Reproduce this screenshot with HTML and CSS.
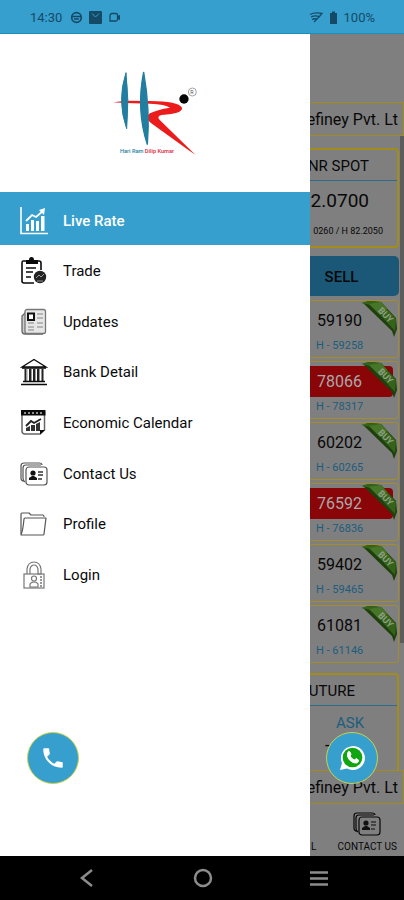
FILE: index.html
```
<!DOCTYPE html>
<html lang="en">
<head>
<meta charset="utf-8">
<meta name="viewport" content="width=device-width, initial-scale=1">
<title>Live Rate</title>
<link rel="stylesheet" href="styles.css">
</head>
<body>
<svg class="defs" aria-hidden="true">
  <symbol id="ribbon" viewBox="0 0 36 36">
    <path d="M2 2 L8 0 L20 1 L35 17 L36 28 L33 36 L31 30 Z" fill="#1f400c"/>
    <path d="M0 2 L7 0 L20 1 L35 18 L34 30 L10 4 Z" fill="#33641a"/>
    <path d="M8 3 L20 1 L26 8 L19 14 Z" fill="#477629"/>
  </symbol>
  <symbol id="cards" viewBox="0 0 28 28">
    <g fill="none" stroke="currentColor" stroke-width="1.2">
      <path d="M4 21 Q1 21 1 18 V6 Q1 3 4 3 H19 Q22 3 22 5"/>
      <path d="M5 22 Q3 21 3 18 V8 Q3 5 6 5 H21"/>
      <rect x="6" y="7" width="21" height="18" rx="3"/>
    </g>
    <circle cx="13" cy="13" r="2.6" fill="#111"/>
    <path d="M9 20 V18 L12 16 H14 L17 18 V20 Z" fill="#111"/>
    <path d="M18 12 H23 M18 15 H23 M18 19 H22" stroke="#333" stroke-width="1.4"/>
  </symbol>
</svg>

<div class="phone">
  <header class="status">
    <span class="clock">14:30</span>
    <svg width="13" height="13" viewBox="0 0 13 13"><circle cx="6.5" cy="6.5" r="4.8" fill="none" stroke="currentColor" stroke-width="1.7"/><path d="M2 5.5 H11 M4 8 H9" stroke="currentColor" stroke-width="1.5"/></svg>
    <svg width="13" height="13" viewBox="0 0 13 13"><rect width="13" height="13" rx="1" fill="currentColor"/><path d="M3 2.5 L6.5 6 L10 2.5" fill="none" stroke="#369fce" stroke-width="1"/></svg>
    <svg width="13" height="13" viewBox="0 0 13 13"><path d="M4 2.5 H8 Q9.500 2.500 9.500 4 V8.500 Q9.500 10 8 10 H2 V5 Q2 2.500 4 2.500" fill="none" stroke="currentColor" stroke-width="1.300"/><path d="M9 5 L12 4 V9 L9 8 Z" fill="currentColor"/></svg>
    <span class="spacer"></span>
    <svg width="14" height="13" viewBox="0 0 14 13"><g fill="none" stroke="currentColor" stroke-width="1.300"><path d="M1 3.500 Q6 1 13 2.500 L10 6"/><path d="M2 6 Q6 4 10 5.500 M3 8.500 Q6 7 8.500 8.500 M5 11 L10 6"/></g></svg>
    <svg width="9" height="14" viewBox="0 0 9 14"><path d="M3 0.500 H6 V2 H8 V13 H1 V2 H3 Z" fill="currentColor"/></svg>
    <span>100%</span>
  </header>

  <main class="stage">
    <aside class="drawer">
      <div class="brand">
        <svg width="110" height="100" viewBox="0 0 330 300" role="img" aria-label="Company logo">
          <path d="M40 127 L78 122 L150 123 Q235 124 246 143 Q250 160 185 165 Q168 169 180 181 L286 284 L265 270 L160 194 Q128 174 150 160 Q170 149 210 143 Q196 132 150 131 L75 129 Z" fill="#ec1c1c"/>
          <path d="M78 38 Q50 122 80 206 Q88 120 78 38 Z" fill="#217ea0" stroke="#217ea0" stroke-width="3"/>
          <path d="M131 36 Q108 150 142 254 Q151 150 131 36 Z" fill="#217ea0" stroke="#217ea0" stroke-width="4"/>
          <circle cx="252" cy="117" r="14" fill="#050505"/>
          <circle cx="277" cy="96" r="12" fill="none" stroke="#777" stroke-width="2"/>
          <text x="271" y="102" font-size="16" fill="#555">R</text>
          <text x="60" y="280" font-size="17" font-weight="500" fill="#2583a6">Hari Ram <tspan fill="#e02a3a">Dilip Kumar</tspan></text>
        </svg>
      </div>
      <nav>
        <ul class="menu">
          <li><a class="active" href="#live">
            <svg width="28" height="28" viewBox="0 0 28 28"><g fill="none" stroke="currentColor"><path d="M1 0 V26.500 H28" stroke-width="1.600"/><path d="M6 14 L12 8 L16 10 L23 4" stroke-width="1.800"/></g><path d="M19 3 L25 1 L24 8 Z" fill="currentColor"/><path d="M6 17 H9 V24 H6 Z M11 13 H14 V24 H11 Z M16 14 H19 V24 H16 Z M21 9 H24.500 V24 H21 Z" fill="currentColor"/></svg>
            Live Rate</a></li>
          <li><a href="#trade">
            <svg width="28" height="28" viewBox="0 0 28 28"><path d="M7 4 H3 Q2 4 2 6 V24 Q2 26 4 26 H14" fill="none" stroke="currentColor" stroke-width="1.600"/><path d="M17 4 H19 Q21 4 21 6 V13" fill="none" stroke="currentColor" stroke-width="1.600"/><path d="M6 3 H9 Q9 0 11.500 0 Q14 0 14 3 H18 V7 H6 Z" fill="currentColor"/><path d="M6 11 H16 M6 15 H13 M6 20 H11" stroke="currentColor" stroke-width="1.500"/><circle cx="20" cy="20" r="6.200" fill="#222"/><path d="M16 21 L19 18 L21 20 L24 17 M17 24 H23" fill="none" stroke="#999" stroke-width="1"/></svg>
            Trade</a></li>
          <li><a href="#updates">
            <svg width="28" height="28" viewBox="0 0 28 28"><path d="M6 4 L2 8 V23 Q2 26 5 26 H23" fill="#ccc" stroke="#666" stroke-width="1.300"/><rect x="5" y="1.500" width="20.500" height="24" rx="2" fill="#e6e6e6" stroke="#777" stroke-width="1.300"/><rect x="8" y="5.500" width="6" height="6.500" fill="#fff" stroke="#111" stroke-width="2"/><path d="M17 6 H23 M17 10 H23 M8 15 H14 M17 15 H23 M8 19 H14 M17 19 H23 M8 22 H14" stroke="#a5a5a5" stroke-width="1.600"/></svg>
            Updates</a></li>
          <li><a href="#bank">
            <svg width="28" height="28" viewBox="0 0 28 28"><path d="M2 9 L14 1.500 L26 9 Z" fill="#fff" stroke="currentColor" stroke-width="1.400"/><path d="M2 10 H26" stroke="currentColor" stroke-width="1.600"/><path d="M5.500 11 V23 M10 11 V23 M14 11 V23 M18 11 V23 M22.500 11 V23" stroke="#222" stroke-width="2"/><path d="M7 11 V23 M11.500 11 V23 M15.500 11 V23 M19.500 11 V23" stroke="#999" stroke-width="1"/><path d="M3 23.500 H25 M1 26.500 H27" stroke="currentColor" stroke-width="1.600"/></svg>
            Bank Detail</a></li>
          <li><a href="#calendar">
            <svg width="28" height="28" viewBox="0 0 28 28"><path d="M2 3 V22 Q2 25 5 25 H20 L24.500 21 V3" fill="#fff" stroke="#666" stroke-width="1.500"/><path d="M1 1 H25.500 V6.500 H1 Z" fill="currentColor"/><path d="M4 4 H23" stroke="#bbb" stroke-width="1.500" stroke-dasharray="2 2"/><path d="M6 17 L11 12 L14 14 L21 10" fill="none" stroke="#222" stroke-width="1.900"/><path d="M6 19 L10 17 V22 H6 Z M11 16 H15 V22 H11 Z M16 15 L20 13 V22 H16 Z" fill="#333"/><path d="M20 25.500 V21 H25 Z" fill="currentColor"/></svg>
            Economic Calendar</a></li>
          <li><a href="#contact"><svg class="soft" width="28" height="28"><use href="#cards"/></svg>
            Contact Us</a></li>
          <li><a href="#profile">
            <svg width="28" height="28" viewBox="0 0 28 28"><g fill="none" stroke="#555" stroke-width="1.200" stroke-linejoin="round"><path d="M1 24 V4 Q1 3 2 3 H9 L11 5 H23 Q24 5 24 7"/><path d="M1 25 Q3 20 4 9 Q4 8 5 8 H26 L24 24 Q24 25 23 25 Z"/></g></svg>
            Profile</a></li>
          <li><a href="#login">
            <svg width="28" height="28" viewBox="0 0 28 28"><g fill="none" stroke="#777" stroke-width="1.200"><path d="M7 13 V8 Q8 1 14 1 Q20 1 21 8 V13 H18 V8 Q17 4 14 4 Q11 4 10 8 V13"/><rect x="4" y="13" width="20" height="14"/><circle cx="14" cy="17.500" r="2.500"/><path d="M10 26 V23 Q11 21 14 21 Q17 21 18 23 V26 Z"/></g><path d="M21 15 V26" stroke="#777" stroke-width="1.500" stroke-dasharray="2 1"/></svg>
            Login</a></li>
        </ul>
      </nav>
    </aside>

    <section class="rates">
      <div class="ticker top">efiney Pvt. Lt</div>
      <div class="scroll">
        <article class="panel spot">
          <h2>NR SPOT</h2>
          <p class="price">2.0700</p>
          <p class="range">0260 / H 82.2050</p>
        </article>
        <div class="sell">SELL</div>
        <div class="list">
          <article class="rate"><b>59190</b><span>H - 59258</span><svg class="ribbon"><use href="#ribbon"/></svg><i>BUY</i></article>
          <article class="rate down"><b>78066</b><span>H - 78317</span><svg class="ribbon"><use href="#ribbon"/></svg><i>BUY</i></article>
          <article class="rate"><b>60202</b><span>H - 60265</span><svg class="ribbon"><use href="#ribbon"/></svg><i>BUY</i></article>
          <article class="rate down"><b>76592</b><span>H - 76836</span><svg class="ribbon"><use href="#ribbon"/></svg><i>BUY</i></article>
          <article class="rate"><b>59402</b><span>H - 59465</span><svg class="ribbon"><use href="#ribbon"/></svg><i>BUY</i></article>
          <article class="rate"><b>61081</b><span>H - 61146</span><svg class="ribbon"><use href="#ribbon"/></svg><i>BUY</i></article>
        </div>
        <article class="panel future">
          <h2>UTURE</h2>
          <p class="ask">ASK</p>
          <p class="dash">-</p>
        </article>
      </div>
      <div class="ticker">efiney Pvt. Lt</div>
      <nav class="tabs">
        <a href="#bank">L</a>
        <a href="#contact"><svg width="28" height="28"><use href="#cards"/></svg>CONTACT US</a>
      </nav>
    </section>

    <button class="fab call" aria-label="Call">
      <svg width="26" height="26" viewBox="0 0 24 24"><path d="M6.600 10.800c1.400 2.800 3.800 5.100 6.600 6.600l2.200-2.200c.3-.3.700-.4 1-.2 1.100.4 2.300.6 3.600.6.600 0 1 .4 1 1V20c0 .6-.4 1-1 1C10.600 21 3 13.400 3 4c0-.6.400-1 1-1h3.500c.6 0 1 .4 1 1 0 1.200.2 2.500.6 3.600.1.300 0 .7-.2 1z" fill="#fff"/></svg>
    </button>
    <button class="fab chat" aria-label="WhatsApp">
      <svg width="26" height="26" viewBox="0 0 26 26"><path d="M1 25 L3 18 A12 12 0 1 1 8 23.500 Z" fill="#fff"/><circle cx="13.500" cy="12.500" r="9.800" fill="#12a512"/><path d="M9 7 Q10 6 11 7 L12 9.500 L11 11 Q12.500 14 15.500 15 L17 13.500 L19.500 15 Q20 17 17.500 18 Q14 18.500 10.500 15 Q7 11 9 7 Z" fill="#fff" stroke="#fff"/></svg>
    </button>
  </main>

  <footer class="system">
    <button aria-label="Back"><svg width="24" height="24" viewBox="0 0 24 24"><path d="M17 4 L7 12 L17 20" fill="none" stroke="currentColor" stroke-width="2.500"/></svg></button>
    <button aria-label="Home"><svg width="24" height="24" viewBox="0 0 24 24"><circle cx="12" cy="12" r="8" fill="none" stroke="currentColor" stroke-width="2.500"/></svg></button>
    <button aria-label="Recents"><svg width="24" height="24" viewBox="0 0 24 24"><path d="M3 6.500 H21 M3 12.500 H21 M3 18.500 H21" stroke="currentColor" stroke-width="2.600"/></svg></button>
  </footer>
</div>
</body>
</html>
```
FILE: styles.css
```
* { box-sizing: border-box; margin: 0; padding: 0; }

body { font-family: Roboto, "Liberation Sans", sans-serif; color: #0a0a0a; background: #000; }
a { color: inherit; text-decoration: none; }
button { border: 0; background: none; }
svg { flex: none; display: block; }
.defs { position: absolute; width: 0; height: 0; }
.soft { color: #555; }

.phone { display: flex; flex-direction: column; min-height: 100vh; }

.status {
  display: flex; align-items: center; gap: 6px;
  height: 34px; padding: 2px 29px 0 30px;
  background: #369fce; border-bottom: 1px solid #1c8dbd;
  color: #154a66; font-size: 13px;
}
.clock { margin-right: 2px; }
.spacer { flex: 1; }

.stage { position: relative; flex: 1; display: flex; }

.drawer { flex: 1; background: #fff; }
.brand { height: 158px; padding: 26px 0 0 100px; }
.menu { display: grid; grid-template-rows: 53px repeat(7, 1fr); height: 407px; list-style: none; }
.menu a { display: flex; align-items: center; gap: 15px; height: 100%; padding: 2px 0 0 20px; font-size: 15px; line-height: 20px; }
.menu .active { background: #369fce; color: #fff; font-weight: 500; padding-top: 4px; }

.rates { width: 94px; display: flex; flex-direction: column; overflow: hidden; background: #7f7f7f; white-space: nowrap; color: #080808; }
.ticker {
  display: flex; align-items: center; justify-content: flex-end; flex: none;
  height: 34px; padding-right: 5px; overflow: hidden;
  border: 1px solid #a38c1e; border-left: 0; font-size: 16px; background: #7f7f7f;
}
.ticker.top { margin-top: 68px; }
.scroll { position: relative; flex: 1 1 0; min-height: 0; overflow: hidden; padding: 12px 5px 0 0; }
.scroll::after { content: ""; position: absolute; top: 0; right: 0; width: 4px; height: 80%; background: #5c5c5c; }

.panel { border: 2px solid #a38c1a; border-left: 0; border-radius: 0 4px 4px 0; }
.panel h2 { display: flex; justify-content: flex-end; height: 31px; align-items: center; padding: 2px 28px 0 0; border-bottom: 1px solid #2b6c8b; font-size: 15px; font-weight: 400; }
.spot { height: 100px; }
.price { display: flex; justify-content: flex-end; padding: 8px 28px 0 0; font-size: 19px; line-height: 24px; }
.range { display: flex; justify-content: flex-end; padding: 12px 14px 0 0; font-size: 9px; line-height: 12px; }
.sell { height: 40px; margin: 8px 0 4px; padding: 2px 26px 0 0; display: flex; align-items: center; justify-content: center; border-radius: 0 5px 5px 0; background: #1b5877; font-size: 15px; font-weight: 500; }

.list { display: grid; gap: 3px; }
.rate { position: relative; height: 58px; padding-top: 4px; border: 1px solid #a38c2a; border-left: 0; border-radius: 0 4px 4px 0; }
.rate b { display: block; width: 83px; height: 31px; padding-left: 7px; border-radius: 0 4px 4px 0; font-size: 16px; font-weight: 400; line-height: 32px; }
.rate span { display: block; padding-left: 6px; font-size: 11px; line-height: 20px; color: #1c5d7e; }
.rate.down b { background: #8a0508; color: #a9a9a9; }
.ribbon { position: absolute; top: 0; right: 1px; width: 36px; height: 36px; }
.rate i { position: absolute; top: 9px; right: 4px; font-size: 9px; line-height: 10px; font-weight: 700; font-style: normal; color: #909d84; transform: rotate(46deg); }

.future { height: 120px; margin-top: 10px; }
.future h2 { padding-right: 42px; }
.ask { padding: 7px 0 0 26px; font-size: 15px; line-height: 20px; color: #1c5d7e; }
.dash { padding-left: 15px; font-size: 18px; line-height: 24px; }

.tabs { display: flex; justify-content: space-between; height: 52px; padding: 5px 7px 3px 1px; font-size: 10px; line-height: 12px; }
.tabs a { display: flex; flex-direction: column; align-items: center; justify-content: flex-end; gap: 3px; }

.fab { position: absolute; bottom: 72px; display: grid; place-items: center; width: 52px; height: 52px; border: 1px solid #c8d24a; border-radius: 50%; background: #369fce; }
.call { left: 27px; }
.chat { right: 26px; }

.system { display: flex; justify-content: space-between; align-items: center; height: 44px; padding: 0 73px 0 75px; background: #000; }
.system button { color: #8c8c8c; }
```
